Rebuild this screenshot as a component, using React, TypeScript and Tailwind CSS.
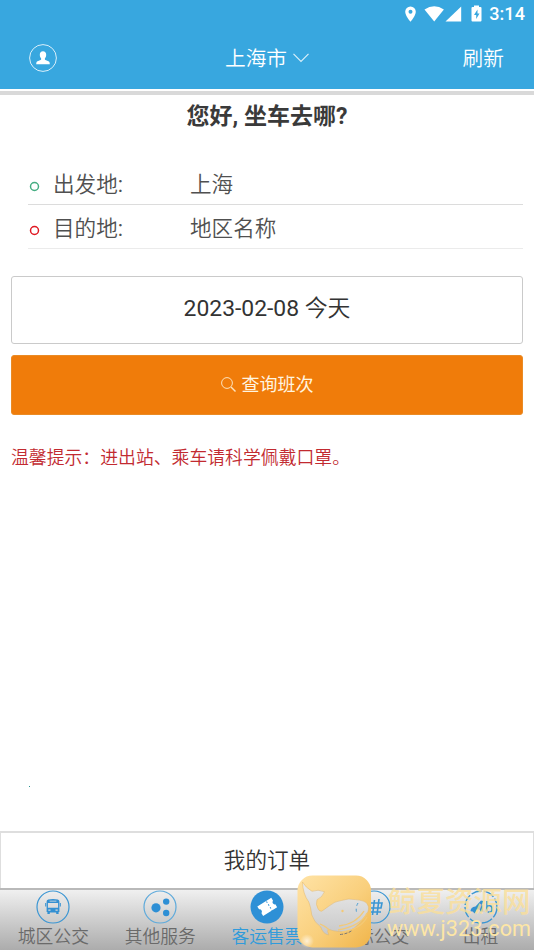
import React, { useState } from 'react';

interface TabItem {
  id: string;
  label: string;
  icon: React.ReactNode;
}

const BusIcon = () => (
  <svg width="34" height="34" viewBox="0 0 34 34">
    <circle cx="17" cy="17" r="16" fill="none" stroke="#3b96d3" strokeWidth="1.2" />
    <path fill="#3390d2" fillRule="evenodd" d="M12.200 9.600q4.800-1 9.600 0 1.600.3 1.600 2v10.400h-.8v2h-2.400v-1.600h-6.400V24h-2.400v-2h-.8V11.600q0-1.700 1.600-2zM13.600 10.700v.9h6.800v-.9zM11.900 13v4.800h10.200V13zM12.300 19.600v1.200h2.200v-1.200zM19.500 19.600v1.200h2.200v-1.200z" />
    <path stroke="#3390d2" strokeWidth="1" d="M9.700 13v3.500M24.300 13v3.500" />
  </svg>
);

const DotsIcon = () => (
  <svg width="34" height="34" viewBox="0 0 34 34">
    <circle cx="17" cy="17" r="16" fill="none" stroke="#5eaadb" strokeWidth="1.2" />
    <g fill="#2d8fd5">
      <circle cx="13" cy="17.8" r="4.6" />
      <circle cx="23.2" cy="11.6" r="3.2" />
      <circle cx="23.2" cy="23" r="3.2" />
    </g>
  </svg>
);

const TicketIcon = () => (
  <svg width="34" height="34" viewBox="0 0 34 34">
    <circle cx="17" cy="17" r="16.5" fill="#2e90d6" />
    <g transform="rotate(-32 17 17)">
      <path fill="#fff" d="M9 11.500h16.500v3.300a2.300 2.300 0 0 0 0 4.400v3.300H9v-3.300a2.300 2.300 0 0 0 0-4.400z" />
      <path stroke="#2e90d6" strokeWidth="1" strokeDasharray="1.600 1.800" d="M19.500 12v11" />
    </g>
  </svg>
);

const IntercityIcon = () => (
  <svg width="34" height="34" viewBox="0 0 34 34" fill="none" stroke="#3b96d3">
    <circle cx="17" cy="17" r="16" strokeWidth="1.2" />
    <path strokeWidth="1.6" d="M12 13h13l-1 5H13l-1 4h12M17.500 10l-2 15M22 9l-2 16" />
  </svg>
);

const TaxiIcon = () => (
  <svg width="34" height="34" viewBox="0 0 34 34" fill="none" stroke="#3b96d3">
    <circle cx="17" cy="17" r="16" strokeWidth="1.4" strokeDasharray="11 2" />
    <path fill="#3390d2" stroke="none" d="M6.500 21.500q0-4.500 5-5l5.500-6 2 .500-1 3.500 1.500 7h-3a2.300 2.300 0 0 0-4.600 0l-1.500 2-1.500-2z" />
    <path strokeWidth="1.6" d="M23 11v10.500" />
    <ellipse cx="25.500" cy="19" rx="2.600" ry="3.300" strokeWidth="1.6" />
  </svg>
);

const tabs: TabItem[] = [
  { id: 'city', label: '城区公交', icon: <BusIcon /> },
  { id: 'other', label: '其他服务', icon: <DotsIcon /> },
  { id: 'ticket', label: '客运售票', icon: <TicketIcon /> },
  { id: 'intercity', label: '城际公交', icon: <IntercityIcon /> },
  { id: 'taxi', label: '出租', icon: <TaxiIcon /> },
];

const StatusBar = () => (
  <div className="flex h-[27px] items-center justify-end pr-[9px] text-white">
    <svg width="86" height="20" viewBox="0 0 86 20" fill="#fff">
      <path fillRule="evenodd" d="M8.5 2.5a5.3 5.3 0 0 0-5.3 5.3c0 4 5.3 10 5.3 10s5.3-6 5.3-10a5.3 5.3 0 0 0-5.3-5.3zm0 3.3a2 2 0 1 1 0 4 2 2 0 0 1 0-4z" />
      <path d="M22.5 5.5q9.8-6.6 19.4 0l-9.7 12z" />
      <path d="M59.2 2.5v15H43.5z" />
      <path fillRule="evenodd" d="M72 1.500h5V3h1.500q1 0 1 1v12.500q0 1-1 1h-8q-1 0-1-1V4q0-1 1-1H72zM75.500 5.500l-3.500 5.500h2.200v4l3.300-5.500h-2z" />
    </svg>
    <span className="ml-px text-[18px] leading-none font-medium tracking-[0.1px]">3:14</span>
  </div>
);

const Header = () => (
  <header className="h-[89px] bg-[#38a7df] text-white">
    <StatusBar />
    <div className="grid h-[62px] grid-cols-3 items-center px-[29px] text-[20.7px] font-[350]">
      <button className="w-7">
        <svg width="28" height="28" viewBox="0 0 28 28">
          <circle cx="14" cy="14" r="13.400" fill="none" stroke="#d9effa" strokeWidth="1" />
          <path fill="#fff" d="M14 7.200c2 0 3.200 1.400 3.200 3.500 0 1.800-.7 2.700-1.300 3.600v1.500l4.100 1.700q.8.500.8 2.700H7.200q0-2.200.8-2.700l4.100-1.700v-1.500c-.6-.9-1.300-1.800-1.300-3.600 0-2.100 1.200-3.500 3.200-3.500z" />
        </svg>
      </button>
      <button className="flex items-center justify-center gap-[6px] whitespace-nowrap">
        <span className="pt-[3px]">上海市</span>
        <svg width="16" height="10" viewBox="0 0 16 10" fill="none" stroke="#d9effa" strokeWidth="1.200">
          <path d="M.5.800 8 8.500 15.500.800" />
        </svg>
      </button>
      <button className="pt-[3px] pr-px text-right">刷新</button>
    </div>
  </header>
);

const StationRow: React.FC<{ label: string; value: string; ring: string; line: string }> = ({ label, value, ring, line }) => (
  <div className={`flex h-[44.500px] items-center border-b pt-[6px] text-[21.600px] font-[350] text-[#505050] ${line}`}>
    <svg className={`mt-[3px] ml-[1px] ${ring}`} width="11" height="11" viewBox="0 0 11 11" fill="none" stroke="currentColor">
      <circle cx="5.500" cy="5.500" r="4" strokeWidth="1.500" />
    </svg>
    <span className="ml-[13px] w-[137px]">
      {label}
      <span className="font-normal">:</span>
    </span>
    <span>{value}</span>
  </div>
);

const WHALE =
  'M6.500 8q3 5.500 9.500 9.300 6-2.300 12.500.400-2.500 6-7.500 8-1.500 5 1 9 1.500 3 3.700 2.500 3-2 6.600-4.700 6.500-5.500 13-6 7-2.500 14-.900 10 .900 12 4.400 3 5-1 10.500-5 8-12 13.500-8 5-15 3.500-7.500-.500-11-2.500-1.500 2 .500 6-6-1-8-8-7-5-9-12-1-8-3-13-6-8-6.300-20z';

const Watermark = () => (
  <div className="pointer-events-none absolute right-0 bottom-0 h-[76px] w-[238px]">
    <svg width="238" height="76" viewBox="0 0 238 76">
      <defs>
        <linearGradient id="gold" x1="0" y1="0" x2="1" y2="1">
          <stop offset="0" stopColor="#ffe3a6" />
          <stop offset=".55" stopColor="#f9cf7c" />
          <stop offset="1" stopColor="#f0b449" />
        </linearGradient>
        <linearGradient id="whale" x1="0" y1="0" x2="0" y2="1">
          <stop offset="0" stopColor="#ececec" />
          <stop offset="1" stopColor="#c8c8c8" />
        </linearGradient>
        <radialGradient id="shine">
          <stop offset="0" stopColor="#fff" />
          <stop offset="1" stopColor="#fff" stopOpacity="0" />
        </radialGradient>
      </defs>
      <rect x="1.500" y="1.500" width="73.500" height="72" rx="15" fill="url(#gold)" />
      <path fill="url(#whale)" stroke="#e3b76a" strokeWidth=".5" d={WHALE} />
      <g fill="none" stroke="#f3c976" strokeWidth="1.300">
        <path d="M71 39q-6 13-29 17M71 43q-6 12-25 15M68 37q-8 13-25 15M24 50q7 3 10 7" />
      </g>
      <circle cx="46.500" cy="37" r="1.200" fill="#f3c976" />
      <path fill="none" stroke="#4b9dd2" strokeDasharray="3 3" d="M62 29q-3 5-1 11" />
      <path fill="none" stroke="#777" strokeDasharray="3 1.500" d="M44 60.500q7-.500 12-4" />
      <circle cx="11" cy="67" r="7" fill="url(#shine)" opacity=".7" />
    </svg>
    <div className="absolute top-[11px] left-[92px] text-[28.500px] leading-[36px] font-medium whitespace-nowrap text-[#fbdf98]/80">鲸夏资源网</div>
    <div className="absolute top-[43px] left-[91px] text-[21.600px] leading-[24px] tracking-[0.1px] whitespace-nowrap text-[#fde6a6]">www.j323.com</div>
  </div>
);

const App: React.FC = () => {
  const [activeTab, setActiveTab] = useState('ticket');

  return (
    <div className="relative flex h-[950px] w-[534px] flex-col overflow-hidden bg-white font-['Roboto','Noto_Sans_CJK_SC',sans-serif]">
      <Header />
      <div className="mt-[2px] h-[4px] shrink-0 bg-[#d9d9d9]" />

      <main className="flex-1 px-[11px]">
        <h1 className="h-[65px] pt-[4px] text-center text-[23px] leading-[36px] font-bold text-[#3a3a3a]">您好, 坐车去哪?</h1>

        <div className="ml-[17px]">
          <StationRow label="出发地" value="上海" ring="text-[#45ad82]" line="border-[#dcdcdc]" />
          <StationRow label="目的地" value="地区名称" ring="text-[#e01822]" line="border-[#ebebeb]" />
        </div>

        <button className="mt-[27px] block h-[68px] w-full rounded-[3px] border border-[#cacaca] pb-px text-[22.900px] font-[350] text-[#333]">
          <span className="font-normal">2023-02-08</span> 今天
        </button>
        <button className="mt-[11px] flex h-[60px] w-full items-center justify-center gap-[6px] rounded-[3px] border border-[#ea8b25] bg-[#f07c0a] pb-[2px] text-[18px] text-[#fff5e0]">
          <svg className="mt-px" width="15" height="15" viewBox="0 0 15 15" fill="none" stroke="#fde3bd" strokeWidth="1">
            <circle cx="6" cy="6" r="5.400" />
            <path strokeWidth="1.400" d="m10 10 4.500 4.500" />
          </svg>
          查询班次
        </button>
        <p className="mt-[29px] text-[17.850px] leading-[27px] font-[350] whitespace-nowrap text-[#c22a30]">温馨提示：进出站、乘车请科学佩戴口罩。</p>
        <div className="mt-[315px] ml-[18px] h-px w-px bg-[#2a9292]" />
      </main>

      <button className="h-[57px] shrink-0 border-x border-t-2 border-[#dedede] bg-white pt-px text-[21.600px] font-[350] text-[#333]">我的订单</button>

      <nav className="grid h-[62px] shrink-0 grid-cols-5 border-t-2 border-[#b9b9b9] bg-linear-to-b from-[#f0f0f0] to-[#acacac]">
        {tabs.map(tab => (
          <button
            key={tab.id}
            className={`flex flex-col items-center whitespace-nowrap text-[17.800px] leading-[26px] font-[350] ${activeTab === tab.id ? 'text-[#2f9bdb]' : 'text-[#6a6a6a]'}`}
            onClick={() => setActiveTab(tab.id)}
          >
            {tab.icon}
            <span>{tab.label}</span>
          </button>
        ))}
      </nav>

      <Watermark />
    </div>
  );
};

export default App;
